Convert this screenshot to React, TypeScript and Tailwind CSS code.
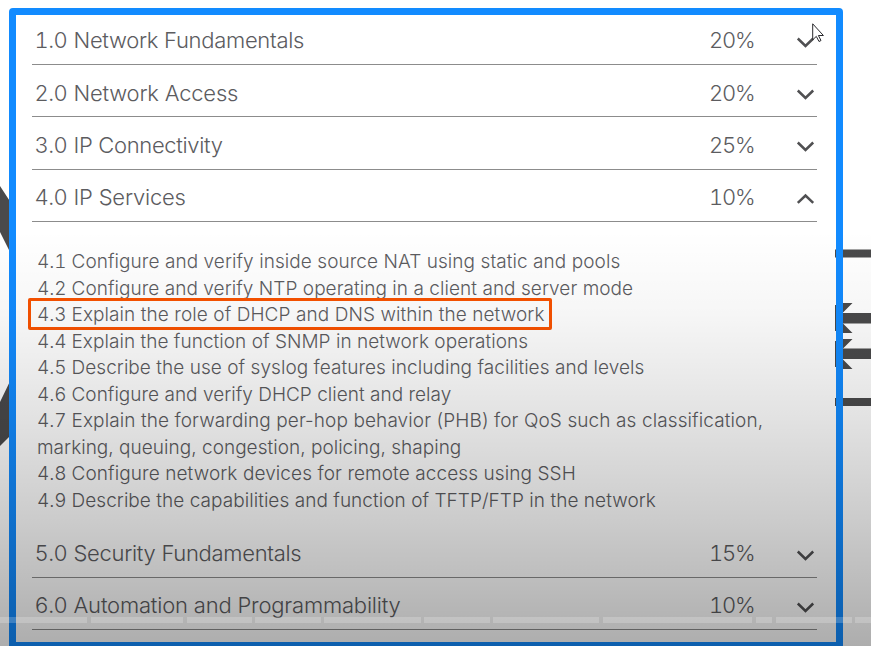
import React from "react";

type Entry = { num?: string; text: string; cls: string };
type TopicEntry = { num: string; text: string; pct: string; cls: string; open?: boolean };

const topics: TopicEntry[] = [
  { num: "1.0", text: "Network Fundamentals", pct: "20%", cls: "tracking-[-0.3px]" },
  { num: "2.0", text: "Network Access", pct: "20%", cls: "tracking-[-0.22px]" },
  { num: "3.0", text: "IP Connectivity", pct: "25%", cls: "tracking-[-0.33px]" },
  { num: "4.0", text: "IP Services", pct: "10%", cls: "tracking-[-0.2px]", open: true },
];

const lowerTopics: TopicEntry[] = [
  { num: "5.0", text: "Security Fundamentals", pct: "15%", cls: "tracking-[-0.3px]" },
  { num: "6.0", text: "Automation and Programmability", pct: "10%", cls: "tracking-[-0.19px]" },
];

const lines: Entry[] = [
  { num: "4.1", text: "Configure and verify inside source NAT using static and pools", cls: "tracking-[0.065px]" },
  { num: "4.2", text: "Configure and verify NTP operating in a client and server mode", cls: "tracking-[0.05px]" },
  { num: "4.3", text: "Explain the role of DHCP and DNS within the network", cls: "tracking-[0.08px]" },
  { num: "4.4", text: "Explain the function of SNMP in network operations", cls: "tracking-[0.04px]" },
  { num: "4.5", text: "Describe the use of syslog features including facilities and levels", cls: "tracking-[0.05px]" },
  { num: "4.6", text: "Configure and verify DHCP client and relay", cls: "tracking-[0.02px]" },
  { num: "4.7", text: "Explain the forwarding per-hop behavior (PHB) for QoS such as classification,", cls: "tracking-[0.1px]" },
  { text: "marking, queuing, congestion, policing, shaping", cls: "tracking-[0.03px]" },
  { num: "4.8", text: "Configure network devices for remote access using SSH", cls: "tracking-[0.09px]" },
  { num: "4.9", text: "Describe the capabilities and function of TFTP/FTP in the network", cls: "tracking-[0.05px]" },
];

const chapters = [87, 92.5, 65, 65.5, 96.5, 65.5, 106, 149.5, 16.5, 76, 16.5];

function Topic({ num, text, pct, cls, open = false }: TopicEntry) {
  return (
    <div className="flex h-[52.2px] items-center border-b border-[#8c8c8c] pl-[2.5px] pr-[2px] pt-[4.6px] text-[22px]">
      <span className="w-[39px] tracking-[-0.6px] tabular-nums">{num}</span>
      <span className={`flex-1 whitespace-nowrap ${cls}`}>{text}</span>
      <span className="w-[86px] whitespace-nowrap tracking-[-1.2px] tabular-nums">{pct}</span>
      <svg className="mt-[2.4px] h-5 w-5 shrink-0" viewBox="0 0 20 20" fill="none" stroke="#505052" strokeWidth="2.5">
        <path d={open ? "M2.8 13.8 10.500 6.500l7.700 7.300" : "M2.8 6.500 10.500 14l7.700-7.500"} />
      </svg>
    </div>
  );
}

export default function App() {
  return (
    <div className="relative h-[646px] w-[871px] overflow-hidden bg-white font-['Inter',sans-serif] font-light text-[#5c5c5f]">
      <svg className="absolute inset-0" width="871" height="646" fill="#4a4a4b">
        <path d="M0 186 30 232V292L0 232ZM0 402 30 340V416L0 446Z" />
        <path d="M835 249.5h36v8h-36ZM835 313h36v10.500h-36ZM835 348.500h36v10.500h-36ZM835 398h36v8h-36Z" />
        <path d="M835 303h17.500l-10 10H835ZM835 323h7.500l10 10H835ZM835 339h17.500l-10 10H835ZM835 359h7.500l10 10H835Z" />
      </svg>

      <main className="relative ml-[9px] mt-2 box-border h-[641px] w-[834px] rounded-[4px] border-[7px] border-[#128bff] bg-white bg-clip-padding pl-4 pr-[19px]">
        <section className="-mt-[2px]">
          {topics.map((t) => <Topic key={t.num} {...t} />)}
        </section>
        <ul className="ml-[5px] mt-[27.4px] text-[19px] leading-[26.5px]">
          {lines.map((l) => (
            <li key={l.text} className="flex whitespace-nowrap">
              {l.num && <span className="w-[34.5px] tracking-[-0.1px] tabular-nums">{l.num}</span>}
              <span className={l.cls}>{l.text}</span>
            </li>
          ))}
        </ul>
        <section className="mt-[11.6px]">
          {lowerTopics.map((t) => <Topic key={t.num} {...t} />)}
        </section>
      </main>

      <svg className="absolute left-[835px] top-0" width="1" height="646" fill="#4a4a4b">
        <path d="M0 249.500h1v8H0ZM0 305h1v26H0ZM0 341h1v26H0ZM0 398h1v8H0Z" />
      </svg>
      <div className="absolute left-[28px] top-[297.500px] h-[32px] w-[524px] rounded-[2px] border-[3px] border-[#f95200]" />
      <div className="absolute inset-x-0 bottom-0 h-[416px] bg-[linear-gradient(to_bottom,rgba(0,0,0,0)_0%,rgba(0,0,0,0.035)_20%,rgba(0,0,0,0.11)_44%,rgba(0,0,0,0.205)_70%,rgba(0,0,0,0.32)_100%)]" />
      <div className="absolute left-0 top-[617px] flex h-[6px] gap-[3.5px]">
        {chapters.map((w, i) => (
          <div key={i} className="h-full shrink-0 bg-white/20" style={{ width: w }} />
        ))}
      </div>
      <svg className="absolute left-[812px] top-[23px]" width="13" height="20" viewBox="0 0 13 20">
        <path d="M.7.8v16l3.600-3.400 2.700 5.100 2-1-2.600-5h5Z" fill="white" stroke="#29292d" strokeWidth="1" />
      </svg>
    </div>
  );
}
